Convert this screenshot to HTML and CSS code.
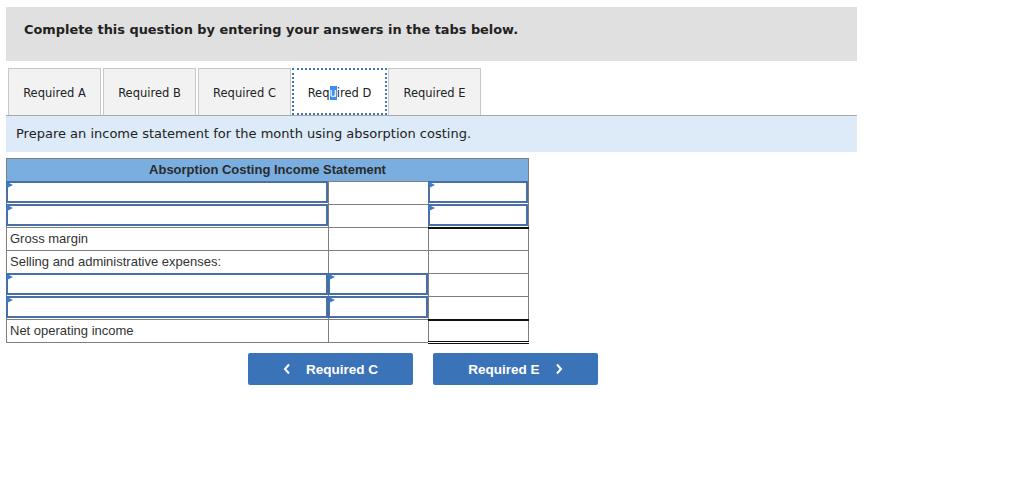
FILE: index.html
```
<!DOCTYPE html>
<html lang="en">

<head>
    <meta charset="UTF-8">
    <title>Absorption costing</title>
    <link rel="stylesheet" href="styles.css">
</head>

<body>
    <div class="page">
        <div class="intro">Complete this question by entering your answers in the tabs below.</div>

        <div class="tabs">
            <button class="tab">Required A</button>
            <button class="tab">Required B</button>
            <button class="tab">Required C</button>
            <button class="tab active">Req<span class="sel">u</span>ired D</button>
            <button class="tab">Required E</button>
        </div>

        <div class="prompt">Prepare an income statement for the month using absorption costing.</div>

        <table class="sheet">
            <tr>
                <th colspan="3">Absorption Costing Income Statement</th>
            </tr>
            <tr>
                <td><div class="box"></div></td>
                <td></td>
                <td><div class="box"></div></td>
            </tr>
            <tr>
                <td><div class="box"></div></td>
                <td></td>
                <td><div class="box"></div></td>
            </tr>
            <tr>
                <td class="label">Gross margin</td>
                <td></td>
                <td class="line"></td>
            </tr>
            <tr>
                <td class="label">Selling and administrative expenses:</td>
                <td></td>
                <td></td>
            </tr>
            <tr>
                <td><div class="box"></div></td>
                <td><div class="box"></div></td>
                <td></td>
            </tr>
            <tr>
                <td><div class="box"></div></td>
                <td><div class="box"></div></td>
                <td></td>
            </tr>
            <tr>
                <td class="label">Net operating income</td>
                <td></td>
                <td class="line total"></td>
            </tr>
        </table>

        <div class="nav">
            <button class="nav-btn">
                <svg class="chev" width="8" height="12" viewBox="0 0 8 12"><polyline points="6,1.5 2,6 6,10.5" /></svg>
                Required C
            </button>
            <button class="nav-btn">
                Required E
                <svg class="chev right" width="8" height="12" viewBox="0 0 8 12"><polyline points="2,1.5 6,6 2,10.5" /></svg>
            </button>
        </div>
    </div>
</body>

</html>
```

FILE: styles.css
```
*{
    margin: 0;
    padding: 0;
    box-sizing: border-box;
}
body{
    background-color: #fff;
    font-family: "DejaVu Sans", Verdana, sans-serif;
    color: #222;
}
.page{
    padding: 7px 6px;
    width: 863px;
}
.intro{
    background-color: #e0e0e0;
    height: 54px;
    padding: 15px 18px 0;
    font-size: 12.9px;
    font-weight: bold;
    color: #222;
}
.tabs{
    display: flex;
    gap: 2px;
    margin-top: 7px;
    padding-left: 2px;
}
.tab{
    width: 93px;
    height: 47px;
    padding-top: 2px;
    background-color: #f2f2f2;
    border: 1px solid #c8c8c8;
    border-bottom: none;
    font-family: "DejaVu Sans", Verdana, sans-serif;
    font-size: 11.5px;
    color: #222;
}
.tab.active{
    width: 95px;
    margin-left: -1px;
    margin-right: -1px;
    background-color: #fff;
    border: 2px dotted #3f73b5;
}
.sel{
    background-color: #3d8ef0;
    color: #fff;
}
.prompt{
    background-color: #dcebf7;
    border-top: 1px solid #a8a8a8;
    height: 37px;
    padding: 10px 10px 0;
    font-size: 13px;
    color: #222;
}
.sheet{
    margin-top: 6px;
    width: 523px;
    border-collapse: collapse;
    font-family: "Liberation Sans", Arial, sans-serif;
    font-size: 13px;
    color: #333;
}
.sheet th{
    background-color: #7aaee0;
    border: 1px solid #7f7f7f;
    height: 23px;
    padding-bottom: 1px;
    font-weight: bold;
    font-size: 13px;
    color: #2b2b2b;
}
.sheet td{
    border: 1px solid #7f7f7f;
    height: 23px;
    padding: 0;
    vertical-align: top;
}
.sheet td:nth-child(1){
    width: 322px;
}
.sheet td:nth-child(2){
    width: 100px;
}
.label{
    padding: 3px 0 0 3px !important;
}
.box{
    height: 22px;
    border: 2px solid #4a6fa5;
    margin: -1px 0 -1px -1px;
    position: relative;
}
.box::before{
    content: "";
    position: absolute;
    left: -1px;
    top: -1px;
    border-left: 6px solid #3d7cc9;
    border-top: 3.5px solid transparent;
    border-bottom: 3.5px solid transparent;
}
.line{
    border-top: 2px solid #111 !important;
}
.total{
    border-bottom: 3px double #111 !important;
}
.nav{
    display: flex;
    gap: 20px;
    margin: 9px 0 0 242px;
}
.nav-btn{
    width: 165px;
    height: 32px;
    display: flex;
    align-items: center;
    justify-content: center;
    background-color: #3b73b9;
    border: none;
    border-radius: 2px;
    color: #fff;
    font-family: "Liberation Sans", Arial, sans-serif;
    font-weight: bold;
    font-size: 13.5px;
}
.chev{
    margin-right: 15px;
    fill: none;
    stroke: #fff;
    stroke-width: 2;
}
.chev.right{
    margin-right: 0;
    margin-left: 15px;
}
```
